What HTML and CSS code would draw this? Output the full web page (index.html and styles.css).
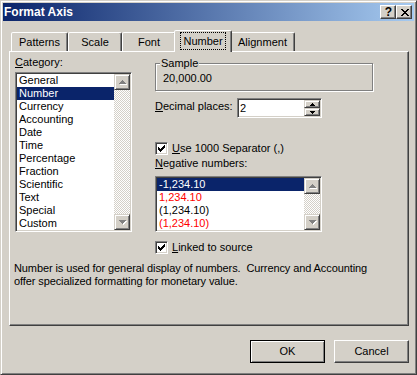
FILE: index.html
```html
<!DOCTYPE html>
<html lang="en">
<head>
    <meta charset="UTF-8">
    <meta name="viewport" content="width=device-width, initial-scale=1.0">
    <title>Format Axis</title>
    <link rel="stylesheet" href="styles.css">
</head>
<body>
    <div class="window">
        <div class="titlebar">
            <span class="title">Format Axis</span>
            <div class="caption-buttons">
                <div class="cap-btn help">?</div>
                <div class="cap-btn close">
                    <svg width="8" height="7" viewBox="0 0 8 7"><path fill="#000" d="M0 0h2v1h-2z M6 0h2v1h-2z M1 1h2v1h-2z M5 1h2v1h-2z M2 2h4v1h-4z M3 3h2v1h-2z M2 4h4v1h-4z M1 5h2v1h-2z M5 5h2v1h-2z M0 6h2v1h-2z M6 6h2v1h-2z"/></svg>
                </div>
            </div>
        </div>

        <div class="dialog">
            <div class="tabs">
                <div class="tab tab-patterns">Patterns</div>
                <div class="tab tab-scale">Scale</div>
                <div class="tab tab-font">Font</div>
                <div class="tab tab-number active"><span class="focus">Number</span></div>
                <div class="tab tab-alignment">Alignment</div>
            </div>

            <div class="panel">
                <div class="col-left">
                    <div class="label"><u>C</u>ategory:</div>
                    <div class="listbox category-list">
                        <div class="items">
                            <div class="item">General</div>
                            <div class="item selected">Number</div>
                            <div class="item">Currency</div>
                            <div class="item">Accounting</div>
                            <div class="item">Date</div>
                            <div class="item">Time</div>
                            <div class="item">Percentage</div>
                            <div class="item">Fraction</div>
                            <div class="item">Scientific</div>
                            <div class="item">Text</div>
                            <div class="item">Special</div>
                            <div class="item">Custom</div>
                        </div>
                        <div class="vscroll">
                            <div class="sb-btn">
                                <svg width="8" height="5" viewBox="0 0 8 5"><path fill="#fff" d="M4 1h1v1h-1z M3 2h3v1h-3z M2 3h5v1h-5z M1 4h7v1h-7z"/><path fill="#808080" d="M3 0h1v1h-1z M2 1h3v1h-3z M1 2h5v1h-5z M0 3h7v1h-7z"/></svg>
                            </div>
                            <div class="sb-track"></div>
                            <div class="sb-btn">
                                <svg width="8" height="5" viewBox="0 0 8 5"><path fill="#fff" d="M1 1h7v1h-7z M2 2h5v1h-5z M3 3h3v1h-3z M4 4h1v1h-1z"/><path fill="#808080" d="M0 0h7v1h-7z M1 1h5v1h-5z M2 2h3v1h-3z M3 3h1v1h-1z"/></svg>
                            </div>
                        </div>
                    </div>
                </div>

                <div class="col-right">
                    <div class="groupbox">
                        <span class="group-title">Sample</span>
                        <div class="sample-value">20,000.00</div>
                    </div>

                    <div class="decimal-row">
                        <div class="decimal-label"><u>D</u>ecimal places:</div>
                        <div class="spin">
                            <div class="spin-value">2</div>
                            <div class="spin-buttons">
                                <div class="spin-btn">
                                    <svg width="5" height="3" viewBox="0 0 5 3"><path fill="#000" d="M2 0h1v1h-1z M1 1h3v1h-3z M0 2h5v1h-5z"/></svg>
                                </div>
                                <div class="spin-btn">
                                    <svg width="5" height="3" viewBox="0 0 5 3"><path fill="#000" d="M0 0h5v1h-5z M1 1h3v1h-3z M2 2h1v1h-1z"/></svg>
                                </div>
                            </div>
                        </div>
                    </div>

                    <div class="check-row separator-row">
                        <div class="checkbox">
                            <svg width="7" height="7" viewBox="0 0 7 7"><path fill="#000" d="M6 0h1v1h-1z M5 1h2v1h-2z M0 2h1v1h-1z M4 2h3v1h-3z M0 3h2v1h-2z M3 3h3v1h-3z M0 4h5v1h-5z M1 5h3v1h-3z M2 6h1v1h-1z"/></svg>
                        </div>
                        <span><u>U</u>se 1000 Separator (,)</span>
                    </div>

                    <div class="label negative-label"><u>N</u>egative numbers:</div>
                    <div class="listbox negative-list">
                        <div class="items">
                            <div class="item selected">-1,234.10</div>
                            <div class="item red">1,234.10</div>
                            <div class="item">(1,234.10)</div>
                            <div class="item red">(1,234.10)</div>
                        </div>
                        <div class="vscroll">
                            <div class="sb-btn">
                                <svg width="8" height="5" viewBox="0 0 8 5"><path fill="#fff" d="M4 1h1v1h-1z M3 2h3v1h-3z M2 3h5v1h-5z M1 4h7v1h-7z"/><path fill="#808080" d="M3 0h1v1h-1z M2 1h3v1h-3z M1 2h5v1h-5z M0 3h7v1h-7z"/></svg>
                            </div>
                            <div class="sb-track"></div>
                            <div class="sb-btn">
                                <svg width="8" height="5" viewBox="0 0 8 5"><path fill="#fff" d="M1 1h7v1h-7z M2 2h5v1h-5z M3 3h3v1h-3z M4 4h1v1h-1z"/><path fill="#808080" d="M0 0h7v1h-7z M1 1h5v1h-5z M2 2h3v1h-3z M3 3h1v1h-1z"/></svg>
                            </div>
                        </div>
                    </div>

                    <div class="check-row linked-row">
                        <div class="checkbox">
                            <svg width="7" height="7" viewBox="0 0 7 7"><path fill="#000" d="M6 0h1v1h-1z M5 1h2v1h-2z M0 2h1v1h-1z M4 2h3v1h-3z M0 3h2v1h-2z M3 3h3v1h-3z M0 4h5v1h-5z M1 5h3v1h-3z M2 6h1v1h-1z"/></svg>
                        </div>
                        <span><u>L</u>inked to source</span>
                    </div>
                </div>

                <p class="description">Number is used for general display of numbers.&nbsp; Currency and Accounting<br>offer specialized formatting for monetary value.</p>
            </div>

            <div class="buttons">
                <div class="button default">OK</div>
                <div class="button">Cancel</div>
            </div>
        </div>
    </div>
</body>
</html>
```

FILE: styles.css
```css
/* Reset default styles */
* {
    box-sizing: border-box;
}

body {
    margin: 0;
    background: #d4d0c8;
    font-family: "Liberation Sans", Arial, sans-serif;
    font-size: 11px;
    line-height: 13px;
    color: #000;
}

u {
    text-decoration-thickness: 1px;
    text-underline-offset: 1px;
}

/* window frame */
.window {
    width: 417px;
    height: 375px;
    background: #d4d0c8;
    border: 1px solid;
    border-color: #d4d0c8 #404040 #404040 #d4d0c8;
    box-shadow: inset 1px 1px #fff, inset -1px -1px #808080;
    padding: 2px;
    display: flex;
    flex-direction: column;
}

.titlebar {
    height: 18px;
    flex: none;
    background: linear-gradient(to right, #0a246a, #a6caf0);
    display: flex;
    align-items: center;
    justify-content: space-between;
    padding: 0 2px 0 1px;
}

.title {
    color: #fff;
    font-weight: bold;
    font-size: 12px;
}

.caption-buttons {
    display: flex;
}

.cap-btn {
    width: 16px;
    height: 14px;
    background: #d4d0c8;
    border: 1px solid;
    border-color: #fff #404040 #404040 #fff;
    box-shadow: inset -1px -1px #808080;
    display: flex;
    align-items: center;
    justify-content: center;
}

.help {
    font-weight: bold;
    font-size: 12px;
    line-height: 12px;
    padding-left: 1px;
}

.close svg {
    display: block;
    margin: 0 0 0 1px;
}

/* dialog body */
.dialog {
    flex: 1;
    padding: 9px 5px 0 6px;
}

.tabs {
    display: flex;
    align-items: flex-end;
    height: 21px;
    padding-left: 2px;
}

.tab {
    height: 19px;
    border: 1px solid;
    border-bottom: none;
    border-color: #fff #404040 transparent #fff;
    border-radius: 2px 2px 0 0;
    box-shadow: inset -1px 0 #808080;
    text-align: center;
    padding-top: 3px;
    background: #d4d0c8;
}

.tab-patterns { width: 57px; }
.tab-scale { width: 54px; }
.tab-font { width: 54px; }
.tab-alignment { width: 65px; }

.tab-number {
    width: 58px;
}

.tab.active {
    position: relative;
    z-index: 1;
    height: 22px;
    margin: 0 -2px -1px;
    padding-top: 1px;
}

.focus {
    display: inline-block;
    border: 1px dotted #000;
    padding: 2px 2px 1px;
}

.panel {
    height: 275px;
    border: 1px solid;
    border-color: #fff #404040 #404040 #fff;
    box-shadow: inset -1px -1px #808080;
    padding: 4px 6px 0 5px;
    display: grid;
    grid-template-columns: 117px 218px;
    column-gap: 23px;
    align-content: start;
}

.label {
    height: 13px;
}

.col-left .label {
    margin-bottom: 3px;
}

/* list boxes */
.listbox {
    display: flex;
    background: #fff;
    border: 1px solid;
    border-color: #808080 #fff #fff #808080;
    box-shadow: inset 1px 1px #404040, inset -1px -1px #d4d0c8;
    padding: 1px;
}

.category-list {
    width: 117px;
    height: 160px;
}

.items {
    flex: 1;
}

.item {
    height: 13px;
    padding-left: 2px;
    white-space: nowrap;
}

.item.selected {
    background: #0a246a;
    color: #fff;
}

.item.red {
    color: #ff0000;
}

.vscroll {
    width: 16px;
    display: flex;
    flex-direction: column;
    background: repeating-conic-gradient(#fff 0 25%, #d4d0c8 0 50%) 0 0 / 2px 2px;
}

.sb-btn {
    width: 16px;
    height: 16px;
    flex: none;
    background: #d4d0c8;
    border: 1px solid;
    border-color: #d4d0c8 #404040 #404040 #d4d0c8;
    box-shadow: inset 1px 1px #fff, inset -1px -1px #808080;
    display: flex;
    align-items: center;
    justify-content: center;
}

.sb-btn svg {
    display: block;
    margin-left: 1px;
}

.sb-track {
    flex: 1;
}

/* right column */
.groupbox {
    position: relative;
    margin-top: 7px;
    height: 28px;
    border: 1px solid #808080;
    box-shadow: inset 1px 1px #fff, 1px 1px #fff;
    padding: 8px 0 0 7px;
}

.group-title {
    position: absolute;
    top: -7px;
    left: 4px;
    padding: 0 1px;
    background: #d4d0c8;
}

.decimal-row {
    display: flex;
    margin-top: 7px;
    height: 20px;
}

.decimal-label {
    width: 82px;
    padding-top: 2px;
}

.spin {
    width: 85px;
    height: 20px;
    display: flex;
    background: #fff;
    border: 1px solid;
    border-color: #808080 #fff #fff #808080;
    box-shadow: inset 1px 1px #404040, inset -1px -1px #d4d0c8;
    padding: 1px;
}

.spin-value {
    flex: 1;
    padding: 2px 0 0 1px;
}

.spin-buttons {
    width: 16px;
    display: flex;
    flex-direction: column;
}

.spin-btn {
    flex: 1;
    background: #d4d0c8;
    border: 1px solid;
    border-color: #d4d0c8 #404040 #404040 #d4d0c8;
    box-shadow: inset 1px 1px #fff, inset -1px -1px #808080;
    display: flex;
    align-items: center;
    justify-content: center;
}

.spin-btn svg {
    display: block;
}

.check-row {
    display: flex;
    gap: 4px;
    height: 13px;
}

.separator-row {
    margin-top: 24px;
}

.linked-row {
    margin-top: 9px;
}

.checkbox {
    width: 13px;
    height: 13px;
    flex: none;
    background: #fff;
    border: 1px solid;
    border-color: #808080 #fff #fff #808080;
    box-shadow: inset 1px 1px #404040, inset -1px -1px #d4d0c8;
    padding: 2px;
}

.checkbox svg {
    display: block;
}

.negative-label {
    margin-top: 2px;
    margin-bottom: 6px;
}

.negative-list {
    width: 167px;
    height: 56px;
}

.description {
    grid-column: 1 / -1;
    margin: 8px 0 0 -1px;
    white-space: nowrap;
    letter-spacing: -0.1px;
}

/* bottom buttons */
.buttons {
    display: flex;
    justify-content: flex-end;
    gap: 9px;
    margin-top: 14px;
}

.button {
    width: 75px;
    height: 23px;
    border: 1px solid;
    border-color: #fff #404040 #404040 #fff;
    box-shadow: inset -1px -1px #808080;
    text-align: center;
    padding-top: 4px;
}

.button.default {
    border-color: #000;
    box-shadow: inset 1px 1px #fff, inset -1px -1px #808080;
}
```
